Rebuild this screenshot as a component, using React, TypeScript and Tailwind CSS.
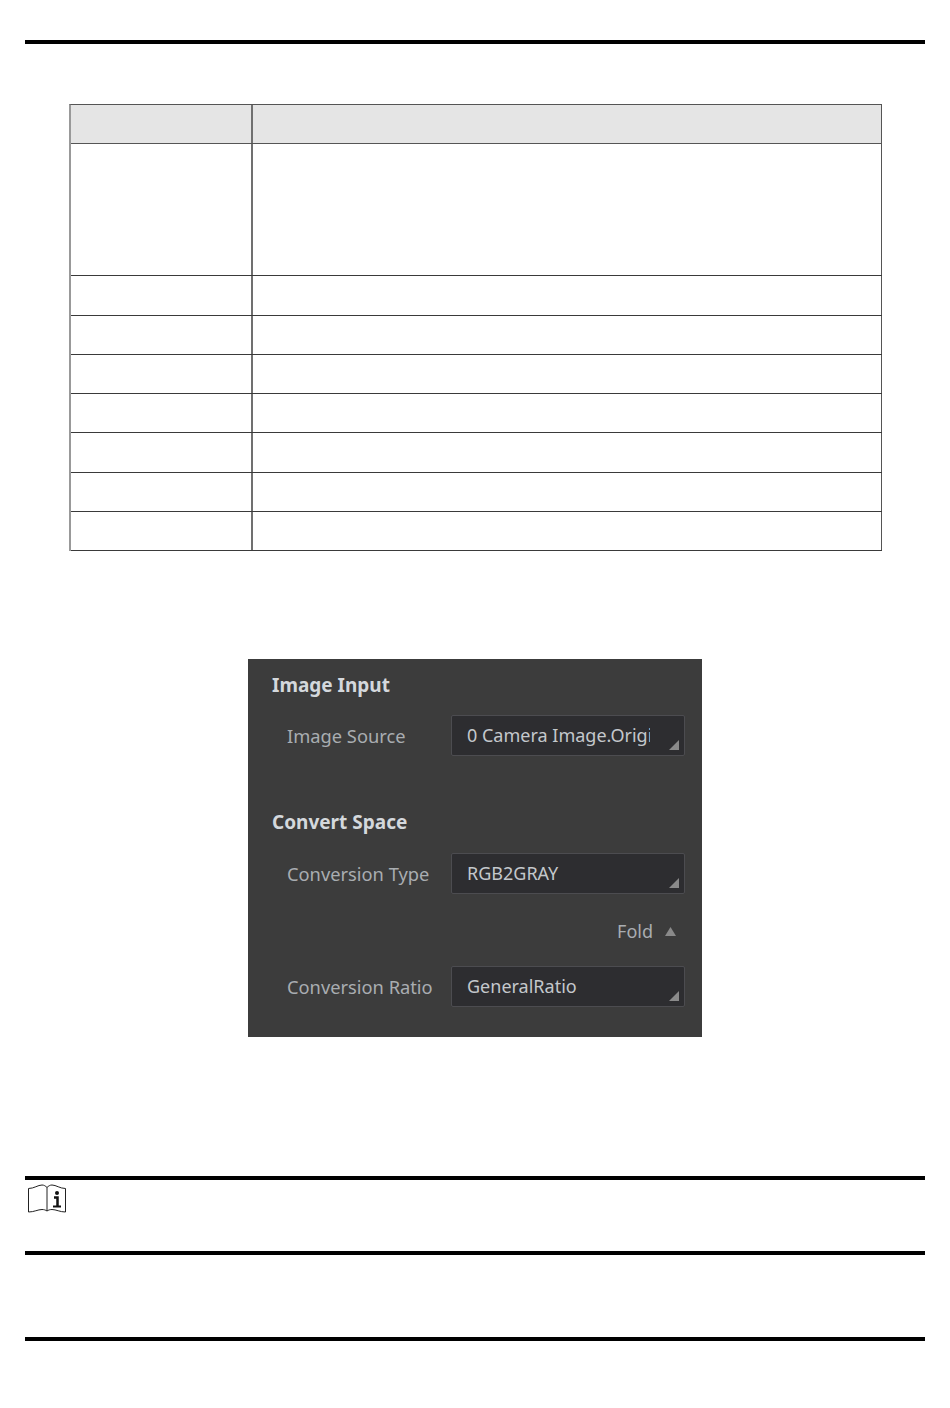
const rowHeights = ["h-[132px]", "h-[40px]", "h-[39px]", "h-[39px]", "h-[39px]", "h-[40px]", "h-[39px]", "h-[39px]"]

function Bar({ className }: { className: string }) {
  return <div className={`h-[4px] bg-black ${className}`} />
}

function SpecTable() {
  return (
    <div className="mt-[60px] ml-[44px] w-[813px] border-t border-l-2 border-t-[#555555] border-l-[#999999]">
      <div className="flex h-[39px] bg-[#e5e5e5] border-b border-[#555555]">
        <div className="w-[182px] border-r-2 border-[#707070]" />
        <div className="flex-1 border-r border-[#555555]" />
      </div>
      {rowHeights.map((h, i) => (
        <div key={i} className={`flex ${h} border-b border-[#3a3a3a]`}>
          <div className="w-[182px] border-r-2 border-[#707070]" />
          <div className="flex-1 border-r border-[#555555]" />
        </div>
      ))}
    </div>
  )
}

function SelectBox({ value }: { value: string }) {
  return (
    <div className="relative w-[234px] h-[41px] rounded-[2px] bg-[#2d2d30] border border-[#4c4c50] pl-[15px] flex items-center">
      <span className="w-[183px] overflow-hidden whitespace-nowrap text-[18px] text-[#c4c8cc]">{value}</span>
      <svg className="absolute right-[5px] bottom-[5px]" width="10" height="10" viewBox="0 0 10 10">
        <path d="M10 0V10H0Z" fill="#8a8a8a" />
      </svg>
    </div>
  )
}

function Field({ label, value, className }: { label: string; value: string; className?: string }) {
  return (
    <div className={`flex items-center pl-[39px] ${className ?? ""}`}>
      <span className="w-[164px] whitespace-nowrap text-[18.3px] text-[#a9adb1]">{label}</span>
      <SelectBox value={value} />
    </div>
  )
}

function ParamPanel() {
  return (
    <div className="mt-[108px] ml-[223px] w-[454px] h-[378px] bg-[#3c3c3c] pt-[12px]">
      <h3 className="pl-[24px] h-[28px] leading-[28px] text-[19px] font-bold text-[#d4d8dc]">Image Input</h3>
      <Field label="Image Source" value="0 Camera Image.Original" className="mt-[16px]" />
      <h3 className="mt-[52px] pl-[24px] h-[28px] leading-[28px] text-[19px] font-bold text-[#d4d8dc]">Convert Space</h3>
      <Field label="Conversion Type" value="RGB2GRAY" className="mt-[17px]" />
      <div className="mt-[21px] h-[32px] flex items-center justify-end pr-[26px] gap-[12px]">
        <span className="text-[18px] text-[#a9adb1]">Fold</span>
        <svg width="11" height="9" viewBox="0 0 11 9">
          <path d="M5.5 0L11 9H0Z" fill="#8a8a8a" />
        </svg>
      </div>
      <Field label="Conversion Ratio" value="GeneralRatio" className="mt-[19px]" />
    </div>
  )
}

function NoteIcon() {
  return (
    <svg width="40" height="30" viewBox="0 0 40 30" fill="none" stroke="#222222" strokeWidth="1">
      <path d="M1.5 4.5C7 4.5 11 1 15 1C17 1 18.5 2 20 3.5C21.5 2 23 1 25 1C29 1 33 4.5 38.5 4.5V28C33 28 29 25.5 25 25.5C23 25.5 21.5 26 20 27C18.5 26 17 25.5 15 25.5C11 25.5 7 28 1.5 28Z" />
      <path d="M20 3.5V27" />
      <circle cx="30" cy="9" r="2" fill="#111111" stroke="none" />
      <path d="M27 13.5H30.5V22" stroke="#111111" strokeWidth="2.5" />
      <path d="M26 22.5H34" stroke="#111111" strokeWidth="2" />
    </svg>
  )
}

export default function App() {
  return (
    <div className="w-[950px] h-[1408px] bg-white px-[25px] pt-[40px] font-['Noto_Sans',sans-serif]">
      <Bar className="" />
      <SpecTable />
      <ParamPanel />
      <Bar className="mt-[139px]" />
      <div className="h-[71px] pt-[4px] pl-[2px]">
        <NoteIcon />
      </div>
      <Bar className="" />
      <Bar className="mt-[82px]" />
    </div>
  )
}
